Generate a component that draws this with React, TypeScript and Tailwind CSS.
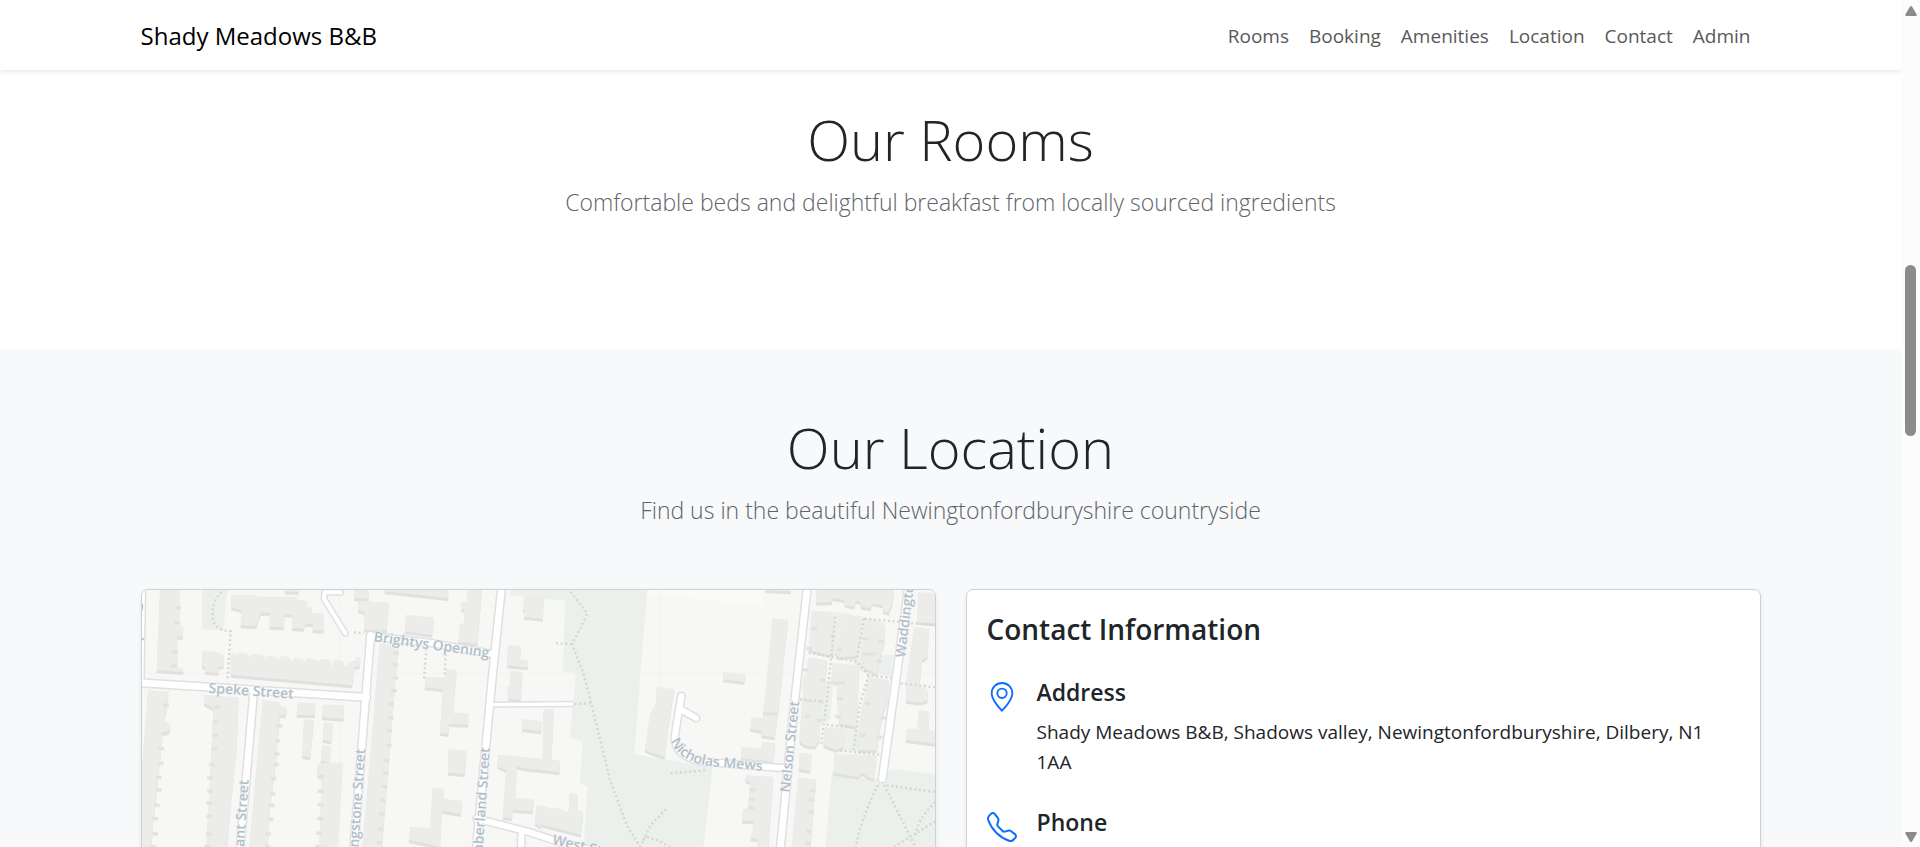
import { BsGeoAlt, BsTelephone } from "react-icons/bs";

const links = ["Rooms", "Booking", "Amenities", "Location", "Contact", "Admin"];

const parks = [
  "216,30 292,30 280,152 216,148",
  "1142,30 1552,30 1532,270 1513,523 1748,562 1720,800 1700,1000 1340,1000 1363,780 1372,618 1350,610 1358,485 1320,470 1338,278 1298,274 1306,62 1142,46",
  "2105,575 2230,600 2290,568 2416,583 2416,1000 2070,1000",
  "2050,92 2150,100 2130,230 2040,220",
  "2180,106 2265,130 2255,225 2290,226 2284,290 2170,270",
  "2020,330 2110,300 2100,420 2010,460",
  "2100,440 2190,450 2180,515 2090,510",
];

const buildings = [
  "90,30 150,30 150,136 160,140 158,168 142,172 144,262 160,266 160,276 80,270",
  "304,44 380,44 380,50 500,50 500,58 530,62 530,80 545,82 545,100 582,100 580,152 548,150 548,132 524,132 522,146 486,144 488,104 464,102 462,142 418,140 420,98 392,98 378,138 332,136 334,90 304,82",
  "464,22 506,22 506,36 464,34",
  "672,30 716,30 716,56 672,54",
  "684,62 776,68 774,94 770,152 702,148 704,96 684,90",
  "764,24 956,24 954,54 764,34",
  "828,104 912,112 906,164 824,154",
  "1012,30 1056,30 1042,190 984,186 990,132 1002,128 1004,90 992,86 994,66 1010,64",
  "216,212 250,214 282,226 280,258 266,260 266,278 226,276 226,262 216,258",
  "302,218 322,222 326,216 356,222 358,234 370,222 400,226 404,234 412,226 440,232 446,240 452,228 478,230 484,246 492,232 518,236 524,246 532,234 560,240 566,248 572,236 600,240 604,260 614,238 640,244 646,260 660,244 676,242 676,232 692,232 688,258 674,260 666,316 302,284",
  "748,190 805,196 795,315 775,560 748,900 688,900 720,540",
  "948,266 980,270 968,398 1016,400 1014,434 958,432 954,462 930,458 938,328 884,322 886,290 944,292",
  "956,508 1010,512 1004,582 954,578",
  "908,622 942,626 940,656 996,662 992,702 936,692 930,800 836,780 840,740 900,744",
  "54,330 116,336 112,370 100,425 122,430 118,454 98,456 84,600 70,720 60,860 36,860 36,560",
  "222,344 326,352 320,500 300,700 284,900 222,900 240,600 250,384 222,370",
  "398,360 448,366 450,378 470,380 468,404 450,404 436,560 416,710 418,740 402,900 350,900 372,640",
  "502,366 556,370 554,406 500,404",
  "578,374 642,376 640,416 576,412",
  "522,416 552,420 540,532 516,528",
  "582,426 608,430 604,484 578,480",
  "576,494 602,498 598,546 572,542",
  "562,550 638,548 630,680 614,900 552,900 570,760 574,592 562,586",
  "1134,194 1172,198 1170,236 1196,242 1192,262 1132,256",
  "1142,272 1178,276 1172,360 1136,356 1132,320 1140,316",
  "1184,46 1242,50 1238,116 1182,110 1184,90 1178,86",
  "1178,416 1236,424 1234,454 1176,448",
  "1104,524 1238,536 1240,388 1272,388 1264,538 1290,542 1288,576 1196,566 1160,560 1156,654 1212,658 1208,694 1148,690 1146,714 1118,712 1128,570 1102,558",
  "1218,680 1232,674 1232,740 1216,730",
  "1220,676 1254,680 1260,690 1266,682 1304,690 1306,700 1318,686 1318,640 1344,642 1342,690 1360,694 1352,764 1216,728",
  "1580,320 1632,328 1624,380 1616,430 1604,530 1566,518 1544,508 1560,400 1578,370",
  "1906,22 1982,22 1982,34 1906,30",
  "1928,114 1974,120 1944,398 1934,472 1894,466 1894,452 1860,446 1864,412 1898,414",
  "1780,274 1846,284 1842,306 1780,298",
  "1834,500 1892,506 1896,484 1936,490 1930,546 1832,534",
  "1846,586 1930,590 1916,790 1910,860 1880,860 1884,776 1862,776 1872,724 1836,722 1838,688 1854,684 1860,606 1846,600",
  "2004,592 2058,598 2048,720 2034,900 1976,900",
  "2008,518 2046,522 2040,572 2006,568",
  "2060,26 2292,30 2288,66 2276,98 2260,94 2258,76 2226,70 2222,84 2194,80 2190,66 2178,62 2172,80 2146,74 2142,60 2108,54 2104,66 2058,68",
  "2046,92 2108,96 2108,220 2096,224 2060,216 2036,206",
  "2138,98 2194,110 2190,160 2180,228 2124,232 2114,214 2132,160",
  "2204,126 2266,140 2264,180 2246,246 2240,282 2204,264 2196,220",
  "2034,232 2092,240 2080,360 2064,370 2020,358 2018,300 2030,280",
  "2108,250 2188,256 2180,440 2126,430 2120,310 2104,300",
  "2214,290 2278,300 2272,360 2256,410 2240,510 2184,510 2180,470 2196,380",
  "2016,364 2074,370 2068,480 2054,500 2024,496 2008,484",
  "2084,440 2144,450 2140,500 2116,510 2080,494",
  "2114,522 2240,526 2232,596 2216,592 2196,578 2184,590 2110,578",
  "2364,36 2420,40 2420,130 2362,126",
  "2352,140 2398,146 2392,230 2376,240 2368,316 2394,330 2392,362 2370,368 2328,362 2328,310",
  "2366,390 2398,394 2396,448 2420,456 2420,492 2328,480 2330,446 2362,446",
];

/* Small ridge shadows along the terraces: x, y */
const ridges: number[][] = [
  [136, 78], [134, 122], [142, 168], [126, 210], [124, 252],
  [100, 370], [94, 456], [86, 500], [84, 544], [78, 586], [78, 624], [72, 670], [68, 710], [68, 756], [62, 794],
  [254, 376], [250, 420], [248, 460], [246, 500], [238, 548], [232, 588], [232, 628], [230, 664], [230, 704], [228, 756], [224, 794],
  [448, 404], [440, 432], [434, 476], [432, 516], [430, 548], [422, 590], [420, 636], [418, 670], [414, 712], [406, 756], [404, 794],
  [566, 584], [564, 628], [564, 668], [562, 710], [560, 754], [556, 794],
  [790, 214], [788, 248], [788, 288], [784, 326], [776, 366], [774, 408], [770, 446], [768, 490], [762, 536], [760, 574], [756, 614], [752, 656], [748, 696], [744, 742], [740, 782],
  [1860, 624], [1858, 652], [1856, 678], [2040, 626], [2036, 654], [2036, 690], [2028, 748], [2026, 784],
  [2044, 140], [2030, 200], [2100, 164], [2122, 202], [2198, 170], [2244, 178], [2240, 238], [2018, 264], [2070, 296], [2104, 302], [2122, 350], [2116, 404],
  [2024, 404], [2060, 416], [2204, 366], [2252, 408], [2190, 460], [2240, 466],
];

const footpaths = [
  "M274,36 Q240,70 250,124 Q262,152 302,154 L292,304",
  "M672,157 L702,160",
  "M889,206 L882,300 M947,222 L944,290",
  "M1322,36 L1372,100 Q1350,150 1326,190 L1360,280 L1384,370 L1440,600 L1490,735 L1530,800 L1546,770 L1580,780 L1620,800",
  "M1278,190 L1322,192 M1334,372 L1382,370",
  "M1622,580 L1732,570 M1608,688 L1562,735 L1536,790",
  "M2116,110 L2104,230 L2090,360 L2074,490",
  "M2036,218 L2090,228 L2180,244 L2216,286 L2284,294",
  "M2202,116 L2180,240 M2216,286 L2190,370 L2170,515",
  "M2010,358 L2080,364 M2090,434 L2170,444 M2130,512 L2250,524",
  "M2204,116 L2416,136 M2312,310 L2416,322",
  "M2244,615 Q2190,720 2176,810 M2262,615 L2356,800 M2270,616 L2416,636",
  "M2416,666 Q2360,720 2356,770 M2416,724 L2290,802",
];

const roads = [
  { d: "M35,20 L30,310", w: 20 },
  { d: "M30,308 L710,352", w: 20 },
  { d: "M722,166 L706,365 L664,900", w: 20 },
  { d: "M720,168 L910,190 L1088,222", w: 18 },
  { d: "M370,348 L350,580 L322,900", w: 20 },
  { d: "M1115,20 L1086,300 L1030,900", w: 20 },
  { d: "M1088,374 L1326,372", w: 10 },
  { d: "M632,37 L584,37 L582,56 L646,160", w: 12 },
  { d: "M1040,716 L1200,757 L1300,790 L1560,850 M1174,766 L1172,900", w: 18 },
  { d: "M2032,20 L1990,400 L1942,900", w: 20 },
  { d: "M2336,20 L2257,596", w: 20 },
  { d: "M1654,348 L1634,470 Q1634,530 1720,545 L1966,565 M1648,386 L1698,414", w: 18 },
];

function StreetMap() {
  return (
    <svg
      viewBox="36 30 2379 900"
      className="block h-auto w-full"
      role="img"
      aria-label="Street map"
      fontFamily="'Open Sans', 'Noto Sans', sans-serif"
      fontSize="42"
      fontWeight="600"
    >
      <rect x="0" y="0" width="2500" height="1000" fill="#f7f7f5" />
      <polygon points="1552,30 1900,30 1895,78 1552,38" fill="#fafaf8" />
      <g fill="#ebf0ec">
        {parks.map((p) => (
          <polygon key={p} points={p} />
        ))}
      </g>
      <path d="M628,30 V900 M1588,30 V900 M36,280 H2416" stroke="#efefed" strokeWidth="2" fill="none" />
      <g fill="#e0e0de">
        {buildings.map((p) => (
          <polygon key={p} points={p} transform="translate(0 9)" />
        ))}
      </g>
      <g fill="#ececeb">
        {buildings.map((p) => (
          <polygon key={p} points={p} />
        ))}
      </g>
      <g fill="#e2e2e0">
        {ridges.map(([x, y]) => (
          <rect key={x + "-" + y} x={x} y={y} width="17" height="10" transform={`rotate(5 ${x} ${y})`} />
        ))}
        <rect x="1900" y="397" width="44" height="9" />
        <rect x="2104" y="304" width="42" height="9" />
        <rect x="2196" y="218" width="42" height="8" />
      </g>
      <g fill="none" stroke="#d5d5d4" strokeWidth="7" strokeDasharray="6 8">
        {footpaths.map((d) => (
          <path key={d} d={d} />
        ))}
      </g>
      <g fill="none" stroke="#e0e0e0" strokeLinecap="round" strokeLinejoin="round">
        {roads.map((r) => (
          <path key={r.d} d={r.d} strokeWidth={r.w + 9} />
        ))}
      </g>
      <g fill="none" stroke="#ffffff" strokeLinecap="round" strokeLinejoin="round">
        {roads.map((r) => (
          <path key={r.d} d={r.d} strokeWidth={r.w} />
        ))}
      </g>
      <g fill="#b0bfca" stroke="#f7f7f5" strokeWidth="4" paintOrder="stroke" strokeLinejoin="round">
        <text transform="translate(235 338) rotate(4)">Speke Street</text>
        <text transform="translate(730 184) rotate(8)">Brightys Opening</text>
        <text transform="translate(356 600) rotate(-86)" textAnchor="end">Grant Street</text>
        <text transform="translate(706 507) rotate(-86)" textAnchor="end">Livingstone Street</text>
        <text transform="translate(1080 503) rotate(-86)" textAnchor="end">Cumberland Street</text>
        <text transform="translate(1979 638) rotate(-84)">Nelson Street</text>
        <text transform="translate(2325 234) rotate(-83)">Waddington</text>
        <text transform="translate(1265 792) rotate(13)">West Street</text>
        <path id="mews" d="M1622,484 Q1650,547 1740,558 L1980,580" fill="none" stroke="none" />
        <text>
          <textPath href="#mews">Nicholas Mews</textPath>
        </text>
      </g>
      <path d="M36,68 Q44,80 36,94 Z M36,173 h5 v8 h-5 Z" fill="#b3c1cc" />
    </svg>
  );
}

function SectionHeading({ title, text }: { title: string; text: string }) {
  return (
    <div className="text-center">
      <h2 className="mb-[6px] text-[56px] leading-[76px] font-light">{title}</h2>
      <p className="text-[23px] leading-[38px] font-light text-[#5f6469]">{text}</p>
    </div>
  );
}

export default function App() {
  return (
    <div className="flex h-screen overflow-hidden bg-white font-['Open_Sans','Noto_Sans',sans-serif] text-[#212529]">
      <div className="min-w-0 flex-1 overflow-hidden">
        <header className="relative z-10 bg-white shadow-[0_2px_5px_rgba(0,0,0,0.09)]">
          <nav className="mx-auto flex h-[70px] max-w-[1650px] items-center justify-between px-[15px] pt-[2px]">
            <a href="#home" className="text-[24px] text-black">Shady Meadows B&amp;B</a>
            <ul className="flex text-[19px] text-[#595959]">
              {links.map((l) => (
                <li key={l}>
                  <a href={"#" + l.toLowerCase()} className="px-[10px]">{l}</a>
                </li>
              ))}
            </ul>
          </nav>
        </header>

        <main>
          <section id="rooms" className="px-[15px] pt-[31px] pb-[128px]">
            <SectionHeading title="Our Rooms" text="Comfortable beds and delightful breakfast from locally sourced ingredients" />
          </section>

          <section id="location" className="bg-[#f8f9fa] pt-[60px]">
            <SectionHeading title="Our Location" text="Find us in the beautiful Newingtonfordburyshire countryside" />
            <div className="mx-auto mt-[60px] grid max-w-[1650px] grid-cols-2 gap-[30px] px-[15px]">
              <div className="overflow-hidden rounded-[7px] border border-[#cfd2d5] shadow-[0_2px_5px_rgba(0,0,0,0.075)]">
                <StreetMap />
              </div>
              <div className="rounded-[7px] border border-[#cfd2d5] bg-white px-[20px] pt-[21px] pb-[20px] shadow-[0_2px_5px_rgba(0,0,0,0.075)]">
                <h3 className="mb-[30px] text-[28px] leading-[36px] font-semibold">Contact Information</h3>
                <div className="flex flex-col gap-[30px]">
                  <div className="flex">
                    <BsGeoAlt className="mt-[5px] mr-5 size-[30px] shrink-0 text-[#0d6efd]" />
                    <div>
                      <h4 className="mb-[10px] text-[23px] leading-[30px] font-semibold">Address</h4>
                      <p className="text-[19px] leading-[30px]">
                        Shady Meadows B&amp;B, Shadows valley, Newingtonfordburyshire, Dilbery, N1 1AA
                      </p>
                    </div>
                  </div>
                  <div className="flex">
                    <BsTelephone className="mt-[5px] mr-5 size-[30px] shrink-0 text-[#0d6efd]" />
                    <h4 className="text-[23px] leading-[30px] font-semibold">Phone</h4>
                  </div>
                </div>
              </div>
            </div>
          </section>
        </main>
      </div>

      <div aria-hidden="true" className="relative flex w-[19px] shrink-0 flex-col items-center justify-between bg-[#fcfcfc] pt-[6px] pb-[5px]">
        <svg viewBox="0 0 12 10" className="h-[10px] w-[12px]" fill="#8b8b8b">
          <path d="M5 .6Q6-.6 7 .6L11.7 8.4Q12 10 10.7 10H1.3Q0 10 .3 8.4Z" />
        </svg>
        <div className="absolute top-[265px] h-[171px] w-[11px] rounded-full bg-[#8b8b8b]" />
        <svg viewBox="0 0 12 10" className="h-[10px] w-[12px]" fill="#8b8b8b">
          <path d="M5 9.4Q6 10.6 7 9.4L11.7 1.6Q12 0 10.7 0H1.3Q0 0 .3 1.6Z" />
        </svg>
      </div>
    </div>
  );
}
